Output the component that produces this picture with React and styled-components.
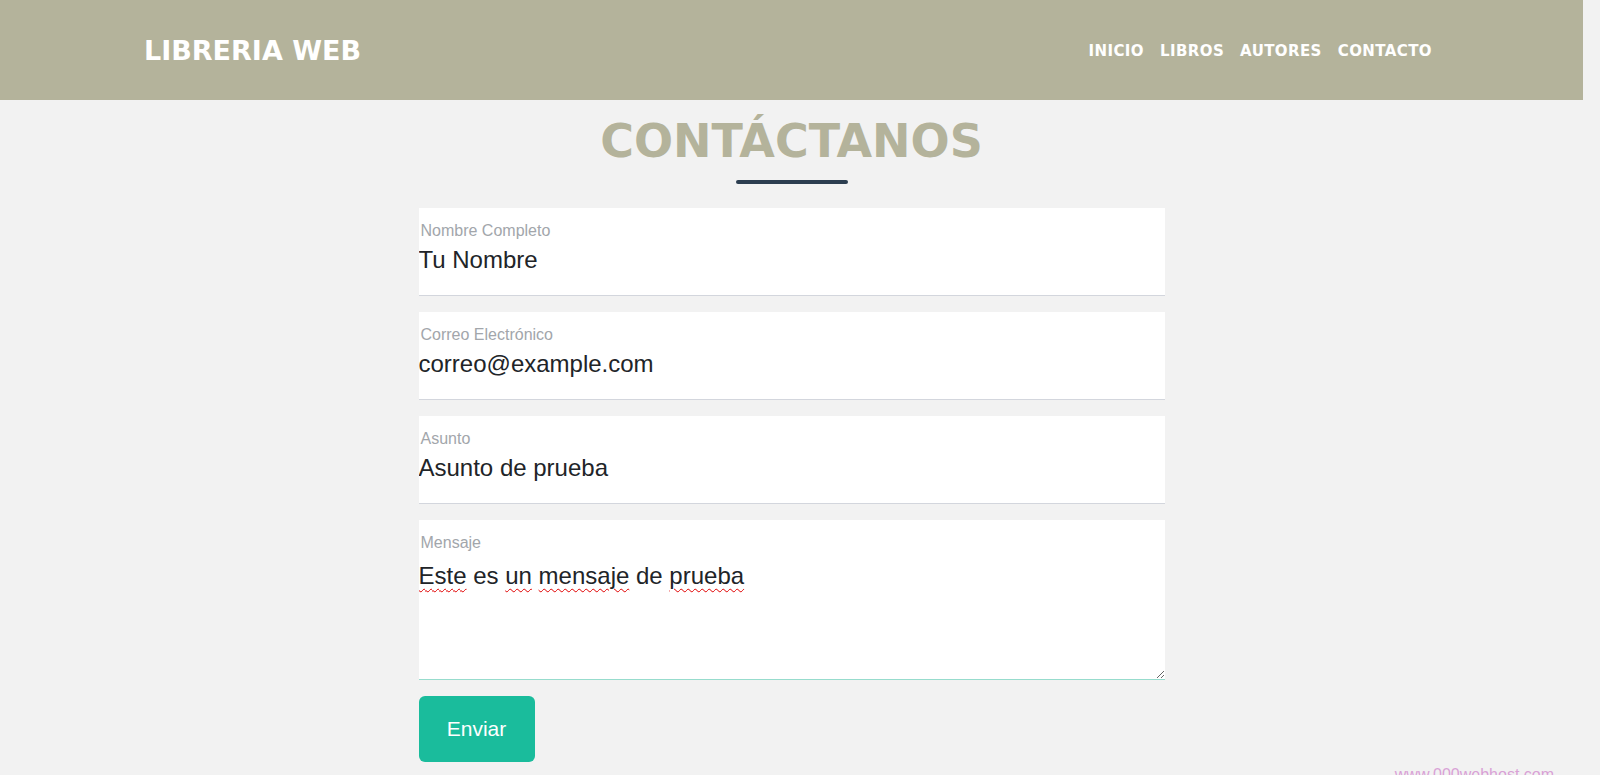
import React from "react";
import styled, {createGlobalStyle} from "styled-components";

const GlobalStyle = createGlobalStyle`
    * {
        box-sizing: border-box;
    }

    body {
        margin: 0;
        background-color: #f2f2f2;
        font-family: "Liberation Sans", Arial, sans-serif;
    }
`

// deixa o espaço da barra de rolagem à direita, como na página original
const Pagina = styled.div`
    min-height: 100vh;
    margin-right: 17px;
`

const Cabecalho = styled.header`
    background-color: #b4b39b;
    height: 100px;
    display: flex;
    align-items: center;
    justify-content: space-between;
    padding: 0 151px 0 144px;
`

const Logo = styled.h1`
    margin: 0;
    color: #FFF;
    font-family: "DejaVu Sans", sans-serif;
    font-weight: 700;
    font-size: 27px;
    line-height: 1;
`

const Menu = styled.nav`
    display: flex;
    gap: 16px;
    padding-top: 2px;

    a {
        color: #FFF;
        text-decoration: none;
        font-family: "DejaVu Sans", sans-serif;
        font-weight: 700;
        font-size: 15px;
        letter-spacing: 0.4px;
    }
`

const Titulo = styled.h2`
    margin: 18px 0 0;
    text-align: center;
    color: #b4b39b;
    font-family: "DejaVu Sans", sans-serif;
    font-weight: 700;
    font-size: 46px;
    line-height: 46px;
`

const Linha = styled.div`
    width: 112px;
    height: 4px;
    border-radius: 2px;
    background-color: #2c3e50;
    margin: 16px auto 24px;
`

const Formulario = styled.form`
    width: 746px;
    margin: 0 auto;
    display: flex;
    flex-direction: column;
    gap: 16px;
`

const Campo = styled.div`
    background-color: #FFF;
    padding: 14px 0 ${props => props.$area ? "0" : "21px"};
    border-bottom: 1px solid ${props => props.$area ? "#97dccd" : "#d3d6dd"};
`

const Rotulo = styled.label`
    display: block;
    padding-left: 2px;
    color: #a2a6ab;
    font-size: 16px;
    line-height: 18px;
`

const Entrada = styled.input`
    display: block;
    width: 100%;
    margin-top: 6px;
    height: 28px;
    padding: 0;
    border: none;
    outline: none;
    background: transparent;
    color: #212428;
    font-family: "Liberation Sans", Arial, sans-serif;
    font-size: 24px;
    line-height: 28px;
`

const AreaTexto = styled.div`
    margin-top: 6px;
    height: 121px;
    padding-top: 4px;
    overflow: auto;
    resize: vertical;
    outline: none;
    color: #212428;
    font-size: 24px;
    line-height: 28px;
`

const Erro = styled.span`
    text-decoration: underline wavy #e00000;
    text-decoration-thickness: 1px;
    text-underline-offset: 4px;
`

const Botao = styled.button`
    align-self: flex-start;
    width: 116px;
    height: 66px;
    border: none;
    border-radius: 6px;
    background-color: #1abc9c;
    color: #FFF;
    font-family: "Liberation Sans", Arial, sans-serif;
    font-size: 21px;
    cursor: pointer;
`

const Rodape = styled.div`
    margin-top: 4px;
    padding-right: 29px;
    text-align: right;
    color: #d9a1d6;
    font-size: 16px;
    line-height: 18px;
`

const campos = [
    {rotulo: "Nombre Completo", valor: "Tu Nombre", tipo: "text"},
    {rotulo: "Correo Electrónico", valor: "correo@example.com", tipo: "email"},
    {rotulo: "Asunto", valor: "Asunto de prueba", tipo: "text"},
]

function App() {
    return (
        <Pagina>
            <GlobalStyle />
            <Cabecalho>
                <Logo>LIBRERIA WEB</Logo>
                <Menu>
                    <a href="#">INICIO</a>
                    <a href="#">LIBROS</a>
                    <a href="#">AUTORES</a>
                    <a href="#">CONTACTO</a>
                </Menu>
            </Cabecalho>

            <Titulo>CONTÁCTANOS</Titulo>
            <Linha />

            <Formulario onSubmit={e => e.preventDefault()}>
                {campos.map(campo => (
                    <Campo key={campo.rotulo}>
                        <Rotulo>{campo.rotulo}</Rotulo>
                        <Entrada type={campo.tipo} defaultValue={campo.valor} />
                    </Campo>
                ))}
                <Campo $area>
                    <Rotulo>Mensaje</Rotulo>
                    <AreaTexto role="textbox" contentEditable suppressContentEditableWarning>
                        <Erro>Este</Erro> es <Erro>un</Erro> <Erro>mensaje</Erro> de <Erro>prueba</Erro>
                    </AreaTexto>
                </Campo>
                <Botao type="submit">Enviar</Botao>
            </Formulario>

            <Rodape>www.000webhost.com</Rodape>
        </Pagina>
    )
}

export default App
